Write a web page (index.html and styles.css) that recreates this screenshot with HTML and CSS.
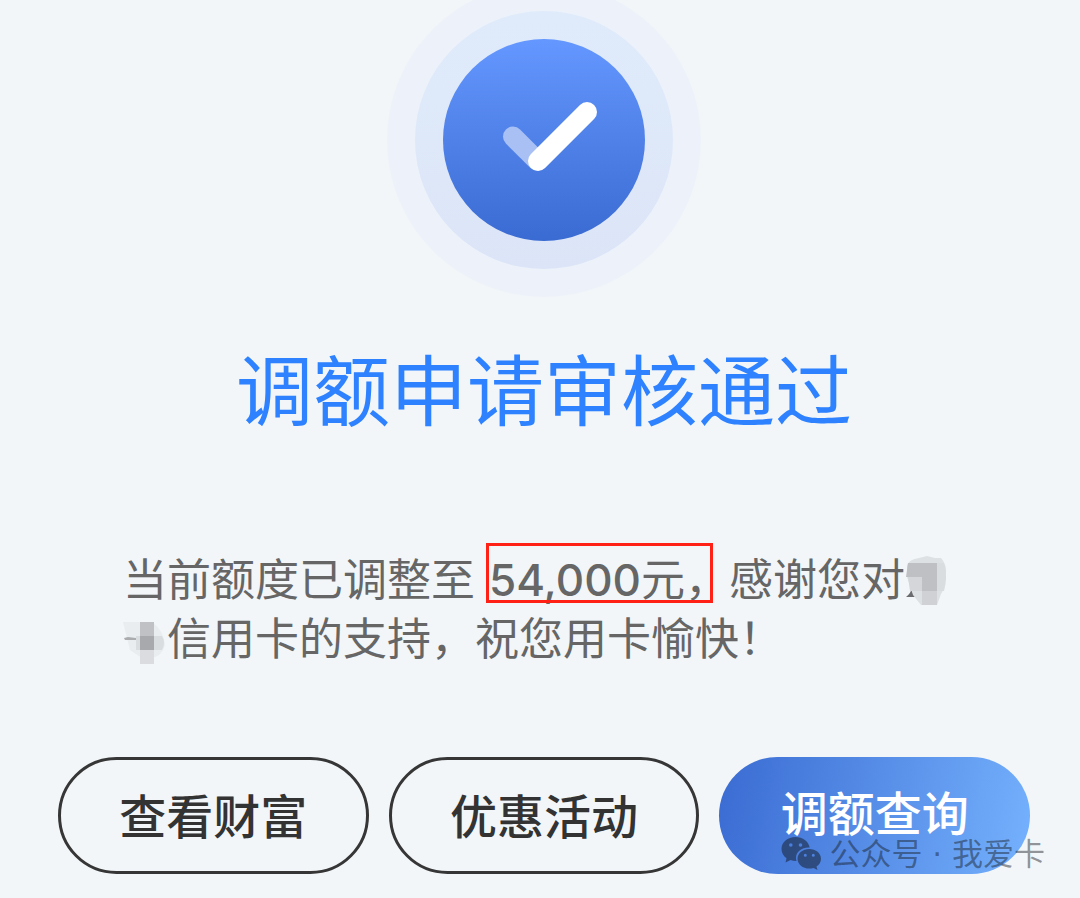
FILE: index.html
```html
<!DOCTYPE html>
<html lang="zh-CN">
<head>
<meta charset="utf-8">
<meta name="viewport" content="width=device-width, initial-scale=1">
<title>调额申请审核通过</title>
<link rel="stylesheet" href="styles.css">
</head>
<body>
<main class="result">
  <svg class="status-icon" viewBox="0 17 314 297" aria-hidden="true">
    <defs>
      <linearGradient id="disc" x1="0" y1="0" x2="0" y2="1">
        <stop offset="0" stop-color="#6497ff"/>
        <stop offset="1" stop-color="#3a6bd2"/>
      </linearGradient>
      <linearGradient id="halo" x1="0" y1="0" x2="0" y2="1">
        <stop offset="0" stop-color="#dfebfb"/>
        <stop offset="1" stop-color="#dce5f7"/>
      </linearGradient>
    </defs>
    <circle cx="157" cy="157" r="157" fill="#edf2fa"/>
    <circle cx="157" cy="157" r="129" fill="url(#halo)"/>
    <circle cx="157" cy="157" r="101" fill="url(#disc)"/>
    <path d="M126 153.500L150 177.500" stroke="#a8c0f4" stroke-width="20" stroke-linecap="round"/>
    <path d="M151 178L200 129" stroke="#fff" stroke-width="20" stroke-linecap="round"/>
  </svg>

  <h1 class="title">调额申请审核通过</h1>

  <p class="message">当前额度已调整至<strong class="amount"><span class="digits">54,000</span>元，</strong>感谢您对<svg class="mosaic" viewBox="0 0 44 50" aria-hidden="true">
      <path d="M1 41q5-4 6-9l5 2-2 7z" fill="#6b6c6e"/>
      <path d="M2 10Q4 3 14 2L22 0l8 2h6q6 6 5 18t-5 18l-4 11H16L8 39 2 21z" fill="#dee1e4"/>
      <path d="M3 7h29v28H17V21H1z" fill="#bfc0c3"/>
      <path d="M3 21h14v14H5z" fill="#d4d6d9"/>
      <path d="M17 35h15v14H17z" fill="#cfd1d4"/>
      <path d="M32 7h7q4 13 0 28h-7z" fill="#dadde0"/>
    </svg><svg class="mosaic" viewBox="0 0 44 50" aria-hidden="true">
      <path d="M0 7h29q12 9 13 23-3 11-13 13H19L7 35z" fill="#e9edf0"/>
      <path d="M13 21h6v14h-6zM31 21h8q4 7 0 14h-8z" fill="#dadde0"/>
      <path d="M17 7h14v14H17z" fill="#c0c1c4"/>
      <path d="M17 21h14v14H17z" fill="#a8a9ac"/>
      <path d="M17 35h14v14H17z" fill="#dadcdf"/>
      <path d="M1 23l4-1 8 1v2H2z" fill="#aaacae"/>
    </svg>信用卡的支持，祝您用卡愉快！</p>

  <div class="actions">
    <button class="btn" type="button">查看财富</button>
    <button class="btn" type="button">优惠活动</button>
    <button class="btn btn-primary" type="button">调额查询</button>
  </div>
</main>

<div class="watermark">
  <svg class="wechat" viewBox="0 0 40 33" aria-hidden="true">
    <path fill-rule="evenodd" d="M14.500 0C6.500 0 .500 5.200.500 12c0 4 2 7 5 9.300L4.500 25.500l5-2.500c2 .7 4 1 6 .9A11 11 0 0 1 15 21c0-6 5.600-10.500 12.500-10.500l1.200.100C27.600 4.500 21.800 0 14.500 0zM9.800 6.200a1.800 1.800 0 1 1 0 3.600 1.800 1.800 0 0 1 0-3.600zm9.700 0a1.800 1.800 0 1 1 0 3.600 1.800 1.800 0 0 1 0-3.600z"/>
    <path fill-rule="evenodd" d="M28.300 12C21.700 12 16.500 16.300 16.500 21.700s5.200 9.900 11.800 9.900c1.500 0 2.900-.2 4.200-.6l4 2-1-3.500c2.800-1.800 4.500-4.600 4.500-7.800C40 16.300 34.900 12 28.300 12zM24.300 16.800a1.500 1.500 0 1 1 0 3 1.500 1.500 0 0 1 0-3zm8 0a1.500 1.500 0 1 1 0 3 1.500 1.500 0 0 1 0-3z"/>
  </svg>
  <span>公众号 · 我爱卡</span>
</div>
</body>
</html>
```
FILE: styles.css
```css
* {
  box-sizing: border-box;
}

body {
  margin: 0;
  position: relative;
  background: #f2f6f9;
  color: #666;
  font-family: "Noto Sans CJK SC", sans-serif;
}

.result {
  display: flex;
  flex-direction: column;
  padding: 0 50px 24px 58px;
}

.status-icon {
  align-self: center;
  width: 314px;
  height: 297px;
  fill: none;
}

.title {
  margin: 34px 0 0;
  color: #2e82ff;
  font-size: 77px;
  font-weight: 400;
  line-height: 112px;
  text-align: center;
}

.message {
  margin: 105px 60px 0 65px;
  font-size: 44px;
  line-height: 59px;
}

.amount {
  position: relative;
  margin-left: 14px;
  font-weight: 400;
}

.amount::after {
  content: "";
  position: absolute;
  inset: -2px 16px 6px -3px;
  border: 3px solid #ff2116;
}

.digits {
  font-family: Inter, sans-serif;
  font-size: 44px;
  font-weight: 500;
  line-height: 1;
}

.mosaic {
  width: 44px;
  height: 50px;
  vertical-align: -10px;
}

.actions {
  display: grid;
  grid-template-columns: repeat(3, 1fr);
  gap: 20px;
  margin-top: 91px;
}

.btn {
  height: 117px;
  padding: 0 0 4px;
  border: 3px solid #363636;
  border-radius: 59px;
  background: none;
  color: #333;
  font-family: inherit;
  font-size: 47px;
  font-weight: 500;
  line-height: 68px;
}

.btn-primary {
  padding-bottom: 10px;
  border: 0;
  background: linear-gradient(100deg, #3a6bd2, #74b1fd);
  color: #fff;
}

.watermark {
  position: absolute;
  right: 35px;
  bottom: 28px;
  display: flex;
  align-items: center;
  gap: 8px;
  color: rgba(20, 24, 28, 0.46);
  font-family: "DejaVu Sans", "Noto Sans CJK SC", sans-serif;
  font-size: 31px;
  font-weight: 400;
  line-height: 32px;
}

.wechat {
  width: 40px;
  height: 33px;
  fill: rgba(32, 50, 82, 0.68);
}
```
